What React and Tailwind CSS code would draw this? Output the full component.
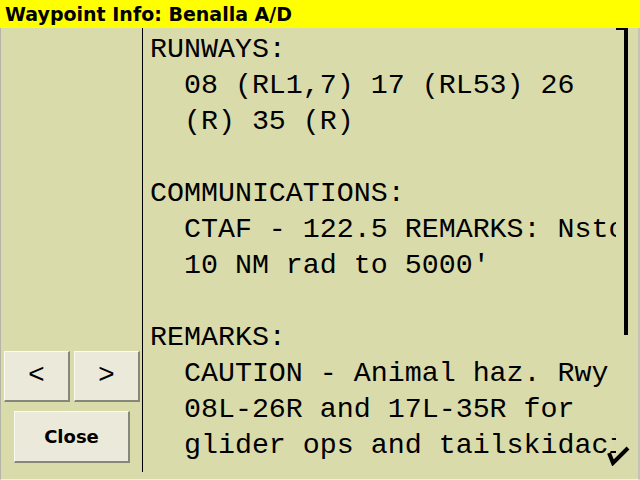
import React from "react";

const lines = [
  "RUNWAYS:",
  "  08 (RL1,7) 17 (RL53) 26",
  "  (R) 35 (R)",
  "",
  "COMMUNICATIONS:",
  "  CTAF - 122.5 REMARKS: Nstop on 126.7 within",
  "  10 NM rad to 5000'",
  "",
  "REMARKS:",
  "  CAUTION - Animal haz. Rwy",
  "  08L-26R and 17L-35R for",
  "  glider ops and tailskidacing only.",
];

function Btn({ className, children }) {
  return (
    <div
      className={
        "flex items-center justify-center bg-[#ebe9d9] border-t border-l border-t-[#fbfbf4] border-l-[#fbfbf4] border-b-2 border-r-2 border-b-[#86867a] border-r-[#86867a] " +
        className
      }
    >
      {children}
    </div>
  );
}

export default function App() {
  return (
    <div className="w-[640px] h-[480px] flex flex-col bg-[#dadbab] overflow-hidden">
      <div className="h-[28px] shrink-0 bg-[#ffff00] pl-[5px] flex items-center">
        <span className="text-[19px] font-bold text-black leading-none font-['DejaVu_Sans',sans-serif]">
          Waypoint Info: Benalla A/D
        </span>
      </div>
      <div className="flex-1 flex flex-row border-l border-r-2 border-b border-l-[#b4b4a4] border-r-[#c4c4b4] border-b-[#f0f0e8]">
        <div className="w-[142px] shrink-0 mb-[7px] border-r border-r-black flex flex-col justify-end items-start pb-[9px]">
          <div className="flex flex-row gap-[4px] pl-[3px]">
            <Btn className="w-[66px] h-[51px]">
              <span className="text-[28px] leading-none text-black font-['Liberation_Mono',monospace] font-light">&lt;</span>
            </Btn>
            <Btn className="w-[66px] h-[51px]">
              <span className="text-[28px] leading-none text-black font-['Liberation_Mono',monospace] font-light">&gt;</span>
            </Btn>
          </div>
          <Btn className="mt-[9px] ml-[13px] w-[116px] h-[52px]">
            <span className="text-[18px] font-bold text-black leading-none font-['DejaVu_Sans',sans-serif]">Close</span>
          </Btn>
        </div>
        <div className="w-[473px] shrink-0 overflow-hidden pl-[7px] pt-[3px]">
          {lines.map((l, i) => (
            <div
              key={i}
              className="h-[36px] leading-[36px] text-[28.3px] whitespace-pre text-black font-['Liberation_Mono',monospace]"
            >
              {l}
            </div>
          ))}
        </div>
        <div className="flex-1 flex flex-col justify-between">
          <div className="flex flex-row items-start">
            <div className="w-[8px] h-[2px] bg-black" />
            <div className="w-[4px] h-[307px] bg-black" />
          </div>
          <div className="mb-[13px] ml-[-9px]">
            <svg width="23" height="20" viewBox="0 0 23 20">
              <polyline points="2,7 6,17 21,2" fill="none" stroke="black" strokeWidth="4" strokeLinejoin="miter" />
            </svg>
          </div>
        </div>
      </div>
    </div>
  );
}
